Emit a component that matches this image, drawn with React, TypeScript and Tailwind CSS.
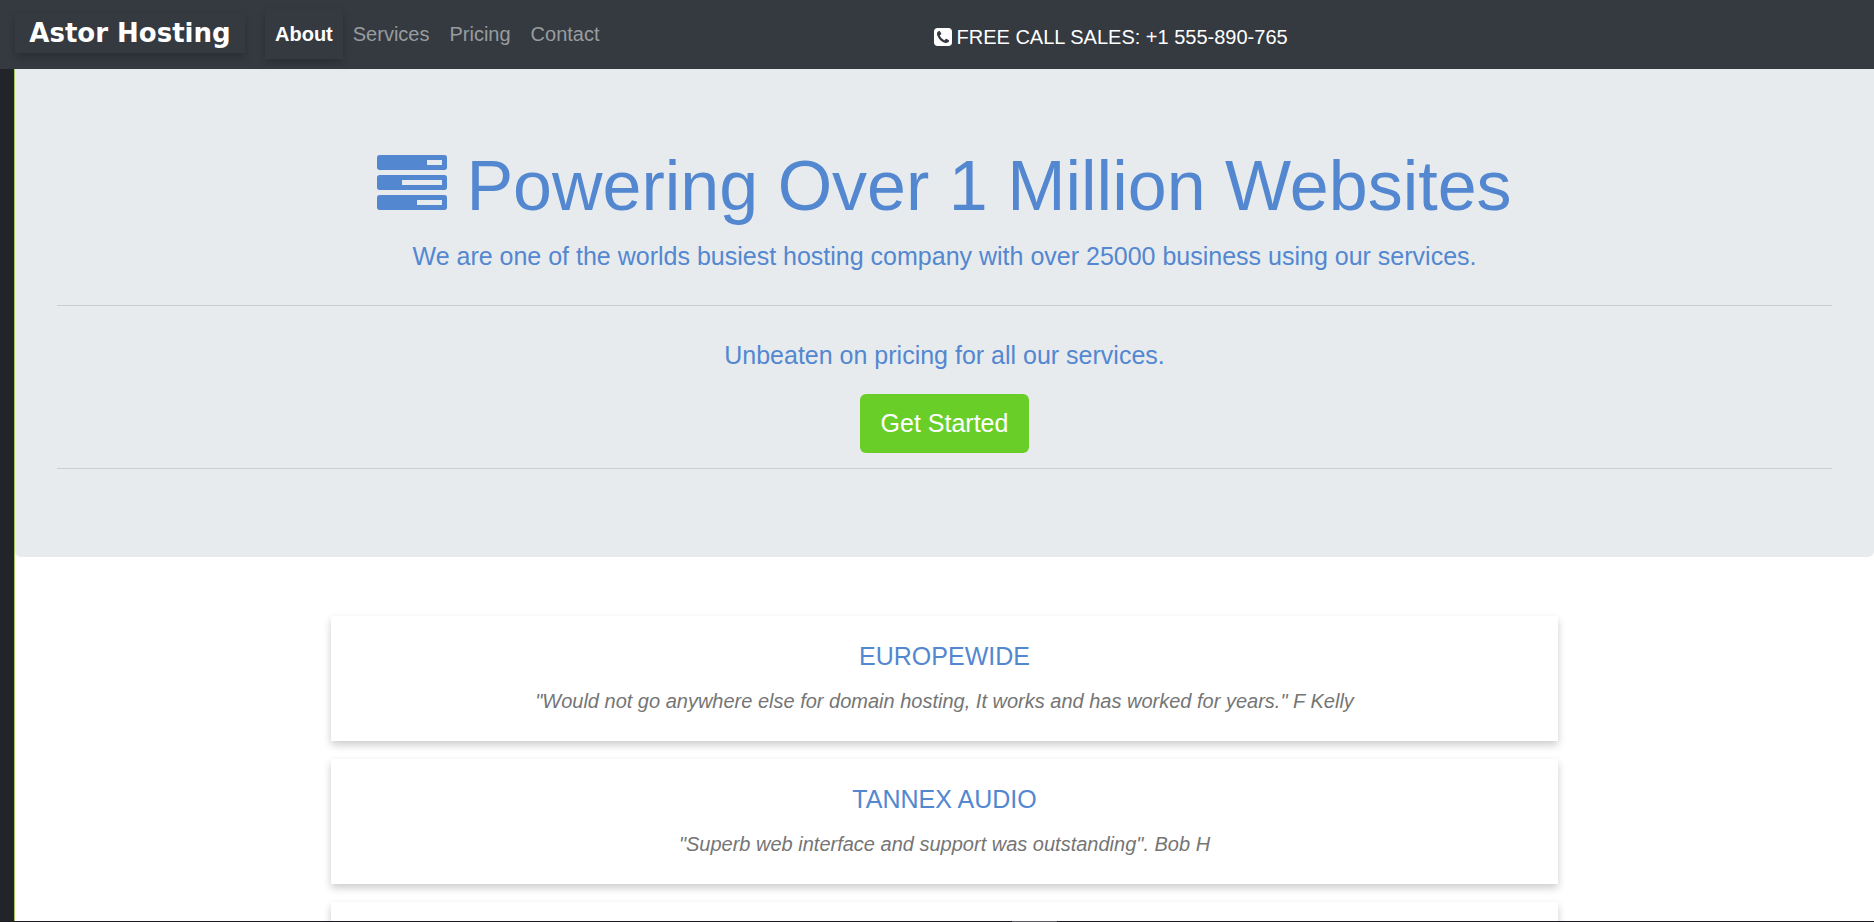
import React from "react";

const navItems = ["Services", "Pricing", "Contact"];

const testimonials = [
  { company: "EUROPEWIDE", quote: '"Would not go anywhere else for domain hosting, It works and has worked for years." F Kelly' },
  { company: "TANNEX AUDIO", quote: '"Superb web interface and support was outstanding". Bob H' },
];

function TasksIcon() {
  return (
    <svg viewBox="0 0 1792 1792" className="mb-0.5 size-[70px] shrink-0" fill="currentColor" aria-hidden="true">
      <path d="M1024 1408h640v-128h-640v128zm-384-512h1024v-128h-1024v128zm640-512h384v-128h-384v128zm512 832v256q0 26-19 45t-45 19h-1664q-26 0-45-19t-19-45v-256q0-26 19-45t45-19h1664q26 0 45 19t19 45zm0-512v256q0 26-19 45t-45 19h-1664q-26 0-45-19t-19-45v-256q0-26 19-45t45-19h1664q26 0 45 19t19 45zm0-512v256q0 26-19 45t-45 19h-1664q-26 0-45-19t-19-45v-256q0-26 19-45t45-19h1664q26 0 45 19t19 45z" />
    </svg>
  );
}

function PhoneIcon() {
  return (
    <svg viewBox="128 128 1536 1536" className="size-[18px] shrink-0" fill="currentColor" aria-hidden="true">
      <path d="M1408 1193q0-11-2-16t-18-16.5-40.5-25-47.5-26.5-45.5-25-28.5-15q-5-3-19-13t-25-15-21-5q-15 0-36.5 20.5t-39.5 45-38.5 45-33.5 20.5q-7 0-16.5-3.5t-15.5-6.5-17-9.5-14-8.5q-99-55-170-126.5t-127-170.5q-2-3-8.5-14t-9.5-17-6.5-15.5-3.5-16.5q0-13 20.5-33.5t45-38.5 45-39.5 20.5-36.5q0-10-5-21t-15-25-13-19q-3-6-15-28.5t-25-45.5-26.5-47.5-25-40.5-16.5-18-16-2q-48 0-101 22-46 21-80 94.5t-34 130.5q0 16 2.5 34t5 30.5 9 33 10 29.5 12.5 33 11 30q60 164 216.5 320.5t320.5 216.5q6 2 30 11t33 12.5 29.5 10 33 9 30.5 5 34 2.5q57 0 130.5-34t94.5-80q22-53 22-101zm256-777v960q0 119-84.5 203.5t-203.5 84.5h-960q-119 0-203.5-84.5t-84.5-203.5v-960q0-119 84.5-203.5t203.5-84.5h960q119 0 203.5 84.5t84.5 203.5z" />
    </svg>
  );
}

export default function App() {
  return (
    <div className="flex h-screen flex-col overflow-hidden bg-white font-['Liberation_Sans',Arial,sans-serif] text-xl">
      <nav className="grid shrink-0 grid-cols-2 items-start bg-[#343a40] pr-[22px] pb-2.5 pl-[15px]">
        <div className="flex items-start">
          <a
            href="#home"
            className="mt-3.5 mr-5 flex w-[230px] items-center justify-center pt-1 pb-[5px] font-['DejaVu_Sans',sans-serif] text-[26px] leading-[30px] font-bold whitespace-nowrap text-white shadow-[0_4px_8px_0_rgba(0,0,0,0.2)]"
          >
            Astor Hosting
          </a>
          <ul className="flex pt-[9px]">
            <li>
              <a href="#about" className="block p-2.5 leading-[30px] font-bold text-white shadow-[0_4px_8px_0_rgba(0,0,0,0.2)]">
                About
              </a>
            </li>
            {navItems.map((item) => (
              <li key={item}>
                <a href={"#" + item.toLowerCase()} className="block p-2.5 leading-[30px] text-[#999c9f]">
                  {item}
                </a>
              </li>
            ))}
          </ul>
        </div>
        <a href="tel:+1555890765" className="mt-[22px] flex items-center gap-[5px] leading-[30px] text-white">
          <PhoneIcon />
          FREE CALL SALES: +1 555-890-765
        </a>
      </nav>

      <div className="flex min-h-0 grow">
        <aside className="w-[15px] shrink-0 border-r border-[#a4c860] bg-[#212529]" />
        <main className="min-w-0 grow">
          <header className="rounded-b-md bg-[#e7ebee] px-[42px] pt-[75px] pb-[88px] text-center text-[#5387d0]">
            <h1 className="flex items-center justify-center gap-[19px] text-[70px] leading-[84px]">
              <TasksIcon />
              Powering Over 1 Million Websites
            </h1>
            <p className="mt-2.5 text-[25px] leading-[37px]">
              We are one of the worlds busiest hosting company with over 25000 business using our services.
            </p>
            <hr className="my-[30px] border-[#c9ced2]" />
            <p className="text-[25px] leading-[38px]">Unbeaten on pricing for all our services.</p>
            <button
              type="button"
              className="mx-auto mt-5 block rounded-md bg-[#6ace28] px-[21px] text-[25px] leading-[59px] text-white"
            >
              Get Started
            </button>
            <hr className="mt-[15px] border-[#c9ced2]" />
          </header>

          <section className="mx-auto mt-[59px] flex w-[66%] flex-col gap-[18px]">
            {testimonials.map((t) => (
              <article
                key={t.company}
                className="bg-white pt-[25px] pb-[25px] text-center shadow-[0_4px_8px_0_rgba(0,0,0,0.2)]"
              >
                <h2 className="text-[25px] leading-[30px] text-[#5387d0]">{t.company}</h2>
                <p className="mt-[15px] leading-[30px] text-[#757575] italic">{t.quote}</p>
              </article>
            ))}
            <article className="h-[125px] shrink-0 bg-white shadow-[0_4px_8px_0_rgba(0,0,0,0.2)]" />
          </section>
        </main>
      </div>
      <div className="flex h-px shrink-0 bg-[#1b1b20]">
        <span className="ml-[54%] w-[45px] bg-[#5c5c60]" />
      </div>
    </div>
  );
}
